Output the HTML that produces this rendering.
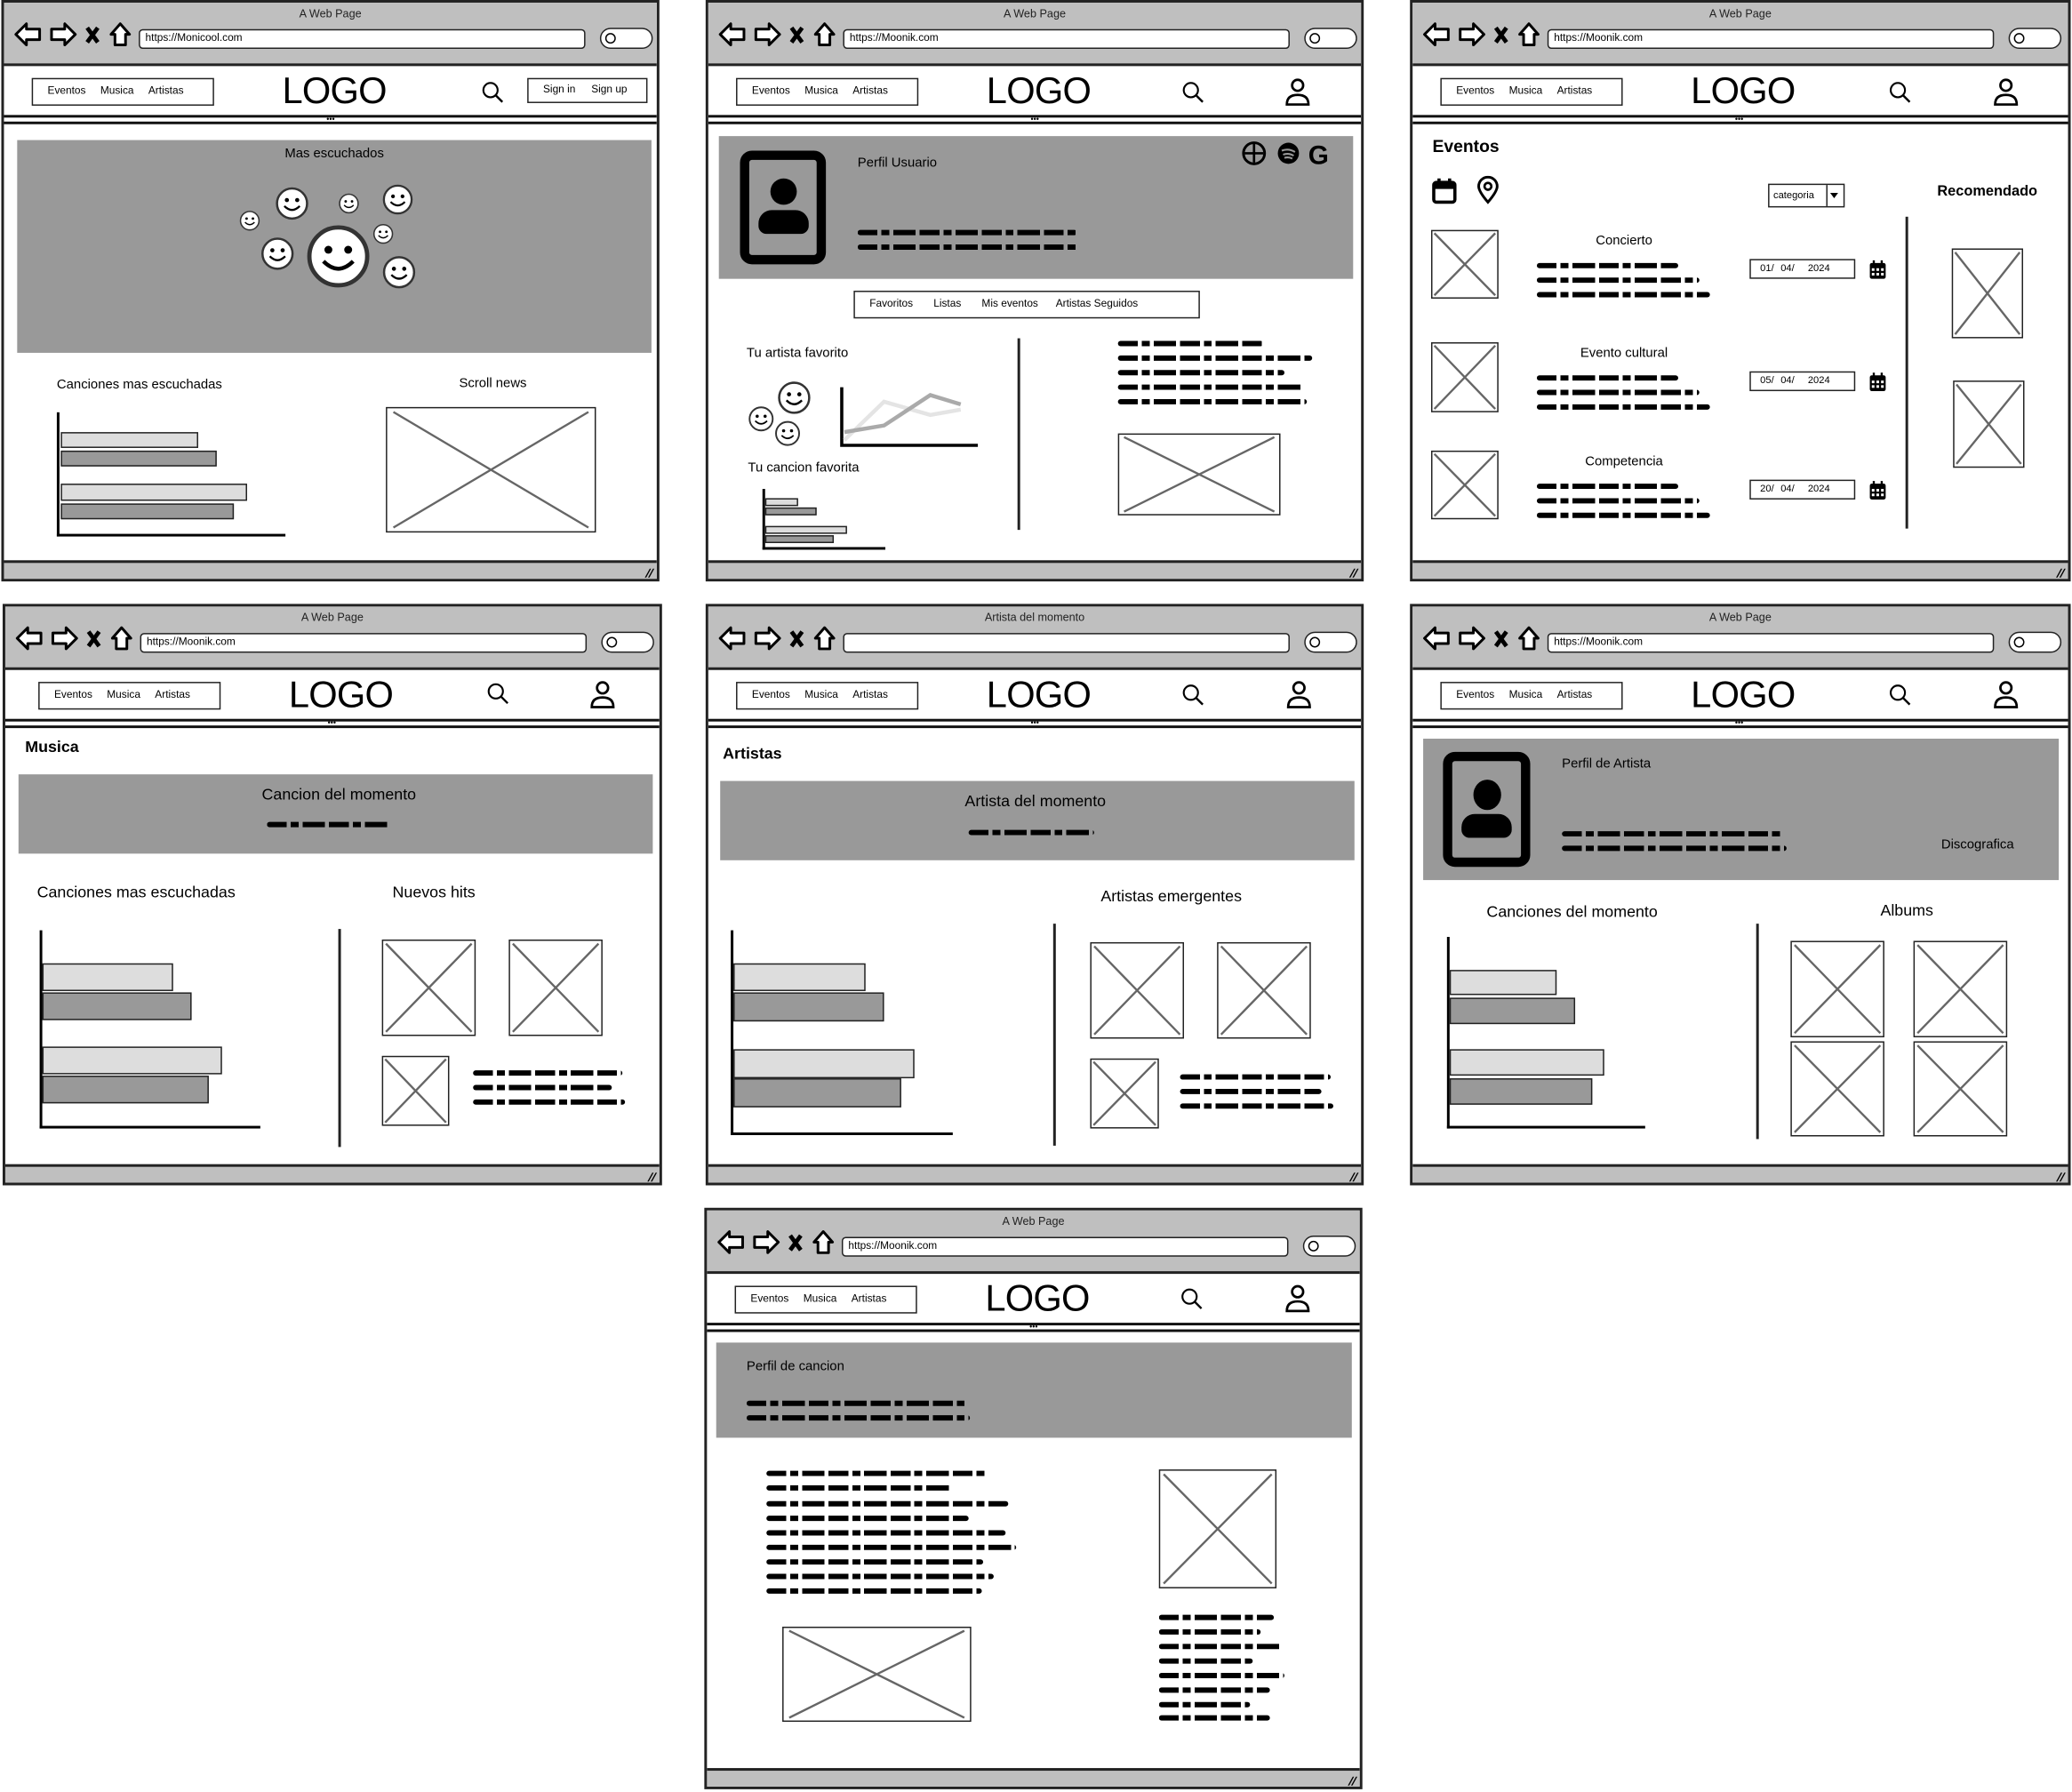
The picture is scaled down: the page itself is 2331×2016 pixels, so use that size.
<!DOCTYPE html>
<html><head><meta charset="utf-8">
<style>
*{box-sizing:border-box;margin:0;padding:0}
html,body{width:2331px;height:2015px;overflow:hidden;background:#fff}
#root{position:absolute;left:0;top:0;width:1568px;height:1356px;transform:scale(1.48661);transform-origin:0 0;font-family:"Liberation Sans",sans-serif;color:#000}
.w{position:absolute;width:498px;height:440px;border:2px solid #222;background:#fff;overflow:hidden}
.w>*{position:absolute}
.tb{left:0;top:0;width:100%;height:48px;background:#bfbfbf;border-bottom:2px solid #222}
.tt{left:0;top:3px;width:100%;text-align:center;font-size:8.5px;color:#222}
.url{left:102px;top:20px;width:338px;height:15px;background:#fff;border:1.8px solid #222;border-radius:3px;font-size:8px;padding-left:4px;line-height:12px}
.sp{left:451px;top:19px;width:40px;height:16px;background:#fff;border:1.8px solid #222;border-radius:9px}
.sp:before{content:"";position:absolute;left:3px;top:3px;width:6px;height:6px;border:1.6px solid #000;border-radius:50%}
.nav{left:21px;top:57px;width:138px;height:21px;border:1.6px solid #222;font-size:8px;line-height:18px;padding-left:11px;word-spacing:0;white-space:nowrap}
.nav span{margin-right:11px}
.logo{left:200px;top:51px;width:100px;text-align:center;font-size:28px;line-height:32px;letter-spacing:-0.5px}
.l1{left:0;top:85px;width:100%;height:2px;background:#111}
.l2{left:0;top:90px;width:100%;height:2px;background:#111}
.dots{left:244px;top:87px;font-size:6px;line-height:4px;letter-spacing:0}
.bb{left:0;top:422px;width:100%;height:18px;background:#bfbfbf;border-top:2px solid #222}
.rz{right:3px;top:427px;font-size:9px;font-weight:bold;transform:skewX(-20deg)}
.ico{overflow:visible}
.g{background:#999}
.t{font-size:10px;white-space:nowrap}
.b{font-weight:bold}
.s{height:3.5px;border-radius:2px;background:repeating-linear-gradient(90deg,#000 0 15px,transparent 15px 18px,#000 18px 24px,transparent 24px 27px,#000 27px 44px,transparent 44px 47px)}
.ph{border:1.6px solid #222;background:#fff}
.ph svg{position:absolute;left:0;top:0;width:100%;height:100%}
.ax{border-left:2px solid #000;border-bottom:2px solid #000}
.bl{background:#ddd;border:1.4px solid #222}
.bd{background:#999;border:1.4px solid #222}
.vd{width:2px;background:#222}
.av{border:7px solid #000;border-radius:9px;background:#999}
.av i{position:absolute;left:50%;border-radius:50%;background:#000}
.db{border:1.4px solid #222;font-size:7.5px;line-height:12px;padding-left:7px;word-spacing:3px;background:#fff;white-space:nowrap}
</style></head><body>
<svg width="0" height="0" style="position:absolute">
<defs>
<symbol id="chr" viewBox="0 0 100 48">
<polygon points="9,24 17,16 17,20 27,20 27,28 17,28 17,32" fill="#fff" stroke="#000" stroke-width="2" stroke-linejoin="round"/>
<polygon points="54,24 46,16 46,20 36,20 36,28 46,28 46,32" fill="#fff" stroke="#000" stroke-width="2" stroke-linejoin="round"/>
<path d="M63 19 L71 30 M71 19 L63 30" stroke="#000" stroke-width="3.2"/>
<polygon points="88,16 95,24 92,24 92,32 84,32 84,24 81,24" fill="#fff" stroke="#000" stroke-width="2" stroke-linejoin="round"/>
</symbol>
<symbol id="sr" viewBox="0 0 20 20"><circle cx="8" cy="8" r="6" fill="none" stroke="#000" stroke-width="1.6"/><path d="M12.5 12.5 L18 18" stroke="#000" stroke-width="1.8"/></symbol>
<symbol id="us" viewBox="0 0 22 24"><circle cx="11" cy="6" r="4.6" fill="none" stroke="#000" stroke-width="2"/><path d="M2 22 Q2 14 11 14 Q20 14 20 22 Z" fill="none" stroke="#000" stroke-width="2"/></symbol>
<symbol id="sm" viewBox="0 0 40 40"><circle cx="20" cy="20" r="17.5" fill="#fff" stroke="#333" stroke-width="2.6"/><circle cx="14" cy="16" r="2.4"/><circle cx="26" cy="16" r="2.4"/><path d="M11 23 Q20 32 29 23" fill="none" stroke="#000" stroke-width="2.4"/></symbol>
<symbol id="x" viewBox="0 0 100 100" preserveAspectRatio="none"><path d="M3 3 L97 97 M97 3 L3 97" stroke="#666" stroke-width="1.6" vector-effect="non-scaling-stroke"/></symbol>
<symbol id="cal" viewBox="0 0 14 16"><rect x="1" y="3" width="12" height="12" rx="1.5" fill="#000"/><path d="M4 1v3M10 1v3" stroke="#000" stroke-width="1.6"/><g fill="#fff"><rect x="2.5" y="7" width="2" height="2"/><rect x="6" y="7" width="2" height="2"/><rect x="9.5" y="7" width="2" height="2"/><rect x="2.5" y="10.5" width="2" height="2"/><rect x="6" y="10.5" width="2" height="2"/><rect x="9.5" y="10.5" width="2" height="2"/></g></symbol>
</defs></svg>
<div id="root">

<!-- W1 -->
<div class="w" style="left:1px;top:0">
<div class="tb"></div><div class="tt">A Web Page</div>
<svg class="ico" style="left:0;top:0" width="100" height="48"><use href="#chr"/></svg>
<div class="url">https://Monicool.com</div><div class="sp"></div>
<div class="nav"><span>Eventos</span><span>Musica</span><span>Artistas</span></div>
<div class="logo">LOGO</div>
<svg style="left:361px;top:59px" width="18" height="18"><use href="#sr"/></svg>
<div style="left:396px;top:57px;width:91px;height:19px;border:1.6px solid #222;font-size:8px;line-height:16px;padding-left:11px;white-space:nowrap"><span style="margin-right:12px">Sign in</span><span>Sign up</span></div>
<div class="l1"></div><div class="l2"></div><div class="dots">•••</div>
<div class="g" style="left:10px;top:104px;width:480px;height:161px"></div>
<div class="t" style="left:150px;top:109px;width:200px;text-align:center">Mas escuchados</div>
<svg style="left:228px;top:167px" width="50" height="50"><use href="#sm"/></svg>
<svg style="left:205px;top:139px" width="26" height="26"><use href="#sm"/></svg>
<svg style="left:253px;top:144px" width="16" height="16"><use href="#sm"/></svg>
<svg style="left:286px;top:137px" width="24" height="24"><use href="#sm"/></svg>
<svg style="left:178px;top:157px" width="16" height="16"><use href="#sm"/></svg>
<svg style="left:194px;top:177px" width="26" height="26"><use href="#sm"/></svg>
<svg style="left:279px;top:167px" width="16" height="16"><use href="#sm"/></svg>
<svg style="left:286px;top:191px" width="26" height="26"><use href="#sm"/></svg>
<div class="t" style="left:40px;top:284px">Canciones mas escuchadas</div>
<div class="t" style="left:320px;top:283px;width:100px;text-align:center">Scroll news</div>
<div class="ax" style="left:40px;top:310px;width:173px;height:94px"></div>
<div class="bl" style="left:43px;top:325px;width:104px;height:12px"></div>
<div class="bd" style="left:43px;top:339px;width:118px;height:12px"></div>
<div class="bl" style="left:43px;top:364px;width:141px;height:13px"></div>
<div class="bd" style="left:43px;top:379px;width:131px;height:12px"></div>
<div class="ph" style="left:289px;top:306px;width:159px;height:95px"><svg><use href="#x"/></svg></div>
<div class="bb"></div><div class="rz">//</div>
</div>

<!-- W2 -->
<div class="w" style="left:534px;top:0">
<div class="tb"></div><div class="tt">A Web Page</div>
<svg class="ico" style="left:0;top:0" width="100" height="48"><use href="#chr"/></svg>
<div class="url">https://Moonik.com</div><div class="sp"></div>
<div class="nav"><span>Eventos</span><span>Musica</span><span>Artistas</span></div>
<div class="logo">LOGO</div>
<svg style="left:358px;top:59px" width="18" height="18"><use href="#sr"/></svg>
<svg style="left:436px;top:57px" width="20" height="22"><use href="#us"/></svg>
<div class="l1"></div><div class="l2"></div><div class="dots">•••</div>
<div class="g" style="left:8px;top:101px;width:480px;height:108px"></div>
<div class="av" style="left:24px;top:112px;width:65px;height:86px"><i style="width:20px;height:20px;margin-left:-10px;top:14px"></i><i style="width:38px;height:18px;margin-left:-19px;top:38px;border-radius:10px 10px 6px 6px"></i></div>
<div class="t" style="left:113px;top:116px">Perfil Usuario</div>
<div class="s" style="left:113px;top:172px;width:166px"></div>
<div class="s" style="left:113px;top:183px;width:168px"></div>
<svg style="left:402px;top:104px" width="70" height="20"><circle cx="11" cy="10" r="8" fill="none" stroke="#000" stroke-width="2"/><path d="M11 3v14M4 10h14" stroke="#000" stroke-width="1.8"/><circle cx="37" cy="10" r="8"/><path d="M32 8q5-2 10 1M33 11q4-1.5 8 .8M34 13.5q3-1 6 .5" stroke="#999" stroke-width="1.4" fill="none"/><text x="52" y="18" font-size="20" font-weight="bold" font-family="Liberation Sans">G</text></svg>
<div style="left:110px;top:218px;width:262px;height:21px;border:1.6px solid #222;font-size:8px;line-height:18px;padding-left:11px;word-spacing:0;white-space:nowrap">Favoritos &nbsp; &nbsp; &nbsp; Listas &nbsp; &nbsp; &nbsp; Mis eventos &nbsp; &nbsp; &nbsp;Artistas Seguidos</div>
<div class="t" style="left:29px;top:260px">Tu artista favorito</div>
<svg style="left:52px;top:286px" width="26" height="26"><use href="#sm"/></svg>
<svg style="left:30px;top:305px" width="20" height="20"><use href="#sm"/></svg>
<svg style="left:50px;top:316px" width="20" height="20"><use href="#sm"/></svg>
<svg style="left:98px;top:288px" width="110" height="50"><path d="M3 3V47H106" stroke="#000" stroke-width="2.4" fill="none"/><path d="M5 43 L35 14 L70 24 L93 20" stroke="#e4e4e4" stroke-width="3" fill="none"/><path d="M5 37 L35 32 L70 9 L93 16" stroke="#aaa" stroke-width="3" fill="none"/></svg>
<div class="t" style="left:30px;top:347px">Tu cancion favorita</div>
<div class="ax" style="left:41px;top:368px;width:93px;height:46px"></div>
<div class="bl" style="left:43px;top:375px;width:25px;height:6px"></div>
<div class="bd" style="left:43px;top:382px;width:39px;height:6px"></div>
<div class="bl" style="left:43px;top:396px;width:62px;height:6px"></div>
<div class="bd" style="left:43px;top:403px;width:52px;height:6px"></div>
<div class="vd" style="left:234px;top:254px;height:145px"></div>
<div class="s" style="left:310px;top:256px;width:110px"></div>
<div class="s" style="left:310px;top:267px;width:147px"></div>
<div class="s" style="left:310px;top:278px;width:126px"></div>
<div class="s" style="left:310px;top:289px;width:141px"></div>
<div class="s" style="left:310px;top:300px;width:143px"></div>
<div class="ph" style="left:310px;top:326px;width:123px;height:62px"><svg><use href="#x"/></svg></div>
<div class="bb"></div><div class="rz">//</div>
</div>

<!-- W3 -->
<div class="w" style="left:1067px;top:0;width:500px">
<div class="tb"></div><div class="tt">A Web Page</div>
<svg class="ico" style="left:0;top:0" width="100" height="48"><use href="#chr"/></svg>
<div class="url">https://Moonik.com</div><div class="sp"></div>
<div class="nav"><span>Eventos</span><span>Musica</span><span>Artistas</span></div>
<div class="logo">LOGO</div>
<svg style="left:360px;top:59px" width="18" height="18"><use href="#sr"/></svg>
<svg style="left:439px;top:57px" width="20" height="22"><use href="#us"/></svg>
<div class="l1"></div><div class="l2"></div><div class="dots">•••</div>
<div class="t b" style="left:15px;top:101px;font-size:13px">Eventos</div>
<svg style="left:14px;top:131px" width="20" height="22" viewBox="0 0 20 22"><rect x="2" y="5" width="16" height="15" rx="2" fill="none" stroke="#000" stroke-width="2.4"/><rect x="2" y="5" width="16" height="5" fill="#000"/><path d="M6 2v5M14 2v5" stroke="#000" stroke-width="2.4"/></svg>
<svg style="left:48px;top:131px" width="18" height="22" viewBox="0 0 18 22"><path d="M9 20 C3 13 2 10 2 8 A7 7 0 0 1 16 8 C16 10 15 13 9 20 Z" fill="none" stroke="#000" stroke-width="2"/><circle cx="9" cy="8" r="2.6" fill="none" stroke="#000" stroke-width="1.8"/></svg>
<div style="left:269px;top:137px;width:58px;height:18px;border:1.4px solid #222;font-size:7.5px;line-height:15px;padding-left:3px">categoria</div>
<div style="left:313px;top:138px;width:1.4px;height:16px;background:#222"></div>
<div style="left:316px;top:144px;width:0;height:0;border-left:3px solid transparent;border-right:3px solid transparent;border-top:4px solid #000"></div>
<div class="t b" style="left:397px;top:137px;font-size:11px">Recomendado</div>
<div class="vd" style="left:373px;top:162px;height:236px"></div>
<div class="ph" style="left:14px;top:172px;width:51px;height:52px"><svg><use href="#x"/></svg></div>
<div class="ph" style="left:14px;top:257px;width:51px;height:53px"><svg><use href="#x"/></svg></div>
<div class="ph" style="left:14px;top:339px;width:51px;height:52px"><svg><use href="#x"/></svg></div>
<div class="t" style="left:110px;top:175px;width:100px;text-align:center">Concierto</div>
<div class="t" style="left:110px;top:260px;width:100px;text-align:center">Evento cultural</div>
<div class="t" style="left:110px;top:342px;width:100px;text-align:center">Competencia</div>
<div class="s" style="left:94px;top:197px;width:107px"></div><div class="s" style="left:94px;top:208px;width:123px"></div><div class="s" style="left:94px;top:219px;width:131px"></div>
<div class="s" style="left:94px;top:282px;width:107px"></div><div class="s" style="left:94px;top:293px;width:123px"></div><div class="s" style="left:94px;top:304px;width:131px"></div>
<div class="s" style="left:94px;top:364px;width:107px"></div><div class="s" style="left:94px;top:375px;width:123px"></div><div class="s" style="left:94px;top:386px;width:131px"></div>
<div class="db" style="left:255px;top:194px;width:80px;height:15px">01/ 04/ &nbsp;2024</div>
<div class="db" style="left:255px;top:279px;width:80px;height:15px">05/ 04/ &nbsp;2024</div>
<div class="db" style="left:255px;top:361px;width:80px;height:15px">20/ 04/ &nbsp;2024</div>
<svg style="left:345px;top:194px" width="14" height="16"><use href="#cal"/></svg>
<svg style="left:345px;top:279px" width="14" height="16"><use href="#cal"/></svg>
<svg style="left:345px;top:361px" width="14" height="16"><use href="#cal"/></svg>
<div class="ph" style="left:408px;top:186px;width:54px;height:68px"><svg><use href="#x"/></svg></div>
<div class="ph" style="left:409px;top:286px;width:54px;height:66px"><svg><use href="#x"/></svg></div>
<div class="bb"></div><div class="rz">//</div>
</div>

<!-- W4 -->
<div class="w" style="left:2px;top:457px;width:499px">
<div class="tb"></div><div class="tt">A Web Page</div>
<svg class="ico" style="left:0;top:0" width="100" height="48"><use href="#chr"/></svg>
<div class="url">https://Moonik.com</div><div class="sp"></div>
<div class="nav" style="left:25px"><span>Eventos</span><span>Musica</span><span>Artistas</span></div>
<div class="logo" style="left:204px">LOGO</div>
<svg style="left:364px;top:57px" width="18" height="18"><use href="#sr"/></svg>
<svg style="left:442px;top:56px" width="20" height="22"><use href="#us"/></svg>
<div class="l1"></div><div class="l2"></div><div class="dots">•••</div>
<div class="t b" style="left:15px;top:99px;font-size:12px">Musica</div>
<div class="g" style="left:10px;top:127px;width:480px;height:60px"></div>
<div class="t" style="left:150px;top:135px;width:205px;text-align:center;font-size:12px">Cancion del momento</div>
<div class="s" style="left:198px;top:163px;width:93px"></div>
<div class="t" style="left:24px;top:209px;font-size:12px">Canciones mas escuchadas</div>
<div class="t" style="left:293px;top:209px;font-size:12px">Nuevos hits</div>
<div class="ax" style="left:26px;top:245px;width:167px;height:150px"></div>
<div class="bl" style="left:28px;top:270px;width:99px;height:21px"></div>
<div class="bd" style="left:28px;top:292px;width:113px;height:21px"></div>
<div class="bl" style="left:28px;top:333px;width:136px;height:21px"></div>
<div class="bd" style="left:28px;top:355px;width:126px;height:21px"></div>
<div class="vd" style="left:252px;top:244px;height:165px"></div>
<div class="ph" style="left:285px;top:252px;width:71px;height:73px"><svg><use href="#x"/></svg></div>
<div class="ph" style="left:381px;top:252px;width:71px;height:73px"><svg><use href="#x"/></svg></div>
<div class="ph" style="left:285px;top:340px;width:51px;height:53px"><svg><use href="#x"/></svg></div>
<div class="s" style="left:354px;top:351px;width:113px"></div><div class="s" style="left:354px;top:362px;width:105px"></div><div class="s" style="left:354px;top:373px;width:115px"></div>
<div class="bb"></div><div class="rz">//</div>
</div>

<!-- W5 -->
<div class="w" style="left:534px;top:457px">
<div class="tb"></div><div class="tt">Artista del momento</div>
<svg class="ico" style="left:0;top:0" width="100" height="48"><use href="#chr"/></svg>
<div class="url"></div><div class="sp"></div>
<div class="nav"><span>Eventos</span><span>Musica</span><span>Artistas</span></div>
<div class="logo">LOGO</div>
<svg style="left:358px;top:58px" width="18" height="18"><use href="#sr"/></svg>
<svg style="left:437px;top:56px" width="20" height="22"><use href="#us"/></svg>
<div class="l1"></div><div class="l2"></div><div class="dots">•••</div>
<div class="t b" style="left:11px;top:104px;font-size:12px">Artistas</div>
<div class="g" style="left:9px;top:132px;width:480px;height:60px"></div>
<div class="t" style="left:145px;top:140px;width:205px;text-align:center;font-size:12px">Artista del momento</div>
<div class="s" style="left:197px;top:169px;width:95px"></div>
<div class="t" style="left:297px;top:212px;font-size:12px">Artistas emergentes</div>
<div class="ax" style="left:17px;top:245px;width:168px;height:155px"></div>
<div class="bl" style="left:19px;top:270px;width:100px;height:21px"></div>
<div class="bd" style="left:19px;top:292px;width:114px;height:22px"></div>
<div class="bl" style="left:19px;top:335px;width:137px;height:22px"></div>
<div class="bd" style="left:19px;top:357px;width:127px;height:22px"></div>
<div class="vd" style="left:261px;top:240px;height:168px"></div>
<div class="ph" style="left:289px;top:254px;width:71px;height:73px"><svg><use href="#x"/></svg></div>
<div class="ph" style="left:385px;top:254px;width:71px;height:73px"><svg><use href="#x"/></svg></div>
<div class="ph" style="left:289px;top:342px;width:52px;height:53px"><svg><use href="#x"/></svg></div>
<div class="s" style="left:357px;top:354px;width:114px"></div><div class="s" style="left:357px;top:365px;width:107px"></div><div class="s" style="left:357px;top:376px;width:116px"></div>
<div class="bb"></div><div class="rz">//</div>
</div>

<!-- W6 -->
<div class="w" style="left:1067px;top:457px;width:500px">
<div class="tb"></div><div class="tt">A Web Page</div>
<svg class="ico" style="left:0;top:0" width="100" height="48"><use href="#chr"/></svg>
<div class="url">https://Moonik.com</div><div class="sp"></div>
<div class="nav"><span>Eventos</span><span>Musica</span><span>Artistas</span></div>
<div class="logo">LOGO</div>
<svg style="left:360px;top:58px" width="18" height="18"><use href="#sr"/></svg>
<svg style="left:439px;top:56px" width="20" height="22"><use href="#us"/></svg>
<div class="l1"></div><div class="l2"></div><div class="dots">•••</div>
<div class="g" style="left:8px;top:100px;width:481px;height:107px"></div>
<div class="av" style="left:23px;top:110px;width:66px;height:87px"><i style="width:21px;height:23px;margin-left:-10.5px;top:14px"></i><i style="width:38px;height:18px;margin-left:-19px;top:40px;border-radius:10px 10px 6px 6px"></i></div>
<div class="t" style="left:113px;top:114px">Perfil de Artista</div>
<div class="s" style="left:113px;top:170px;width:168px"></div>
<div class="s" style="left:113px;top:181px;width:170px"></div>
<div class="t" style="left:400px;top:175px">Discografica</div>
<div class="t" style="left:56px;top:224px;font-size:12px">Canciones del momento</div>
<div class="t" style="left:354px;top:223px;font-size:12px">Albums</div>
<div class="ax" style="left:26px;top:250px;width:150px;height:145px"></div>
<div class="bl" style="left:28px;top:275px;width:81px;height:19px"></div>
<div class="bd" style="left:28px;top:296px;width:95px;height:20px"></div>
<div class="bl" style="left:28px;top:335px;width:117px;height:20px"></div>
<div class="bd" style="left:28px;top:357px;width:108px;height:20px"></div>
<div class="vd" style="left:260px;top:240px;height:163px"></div>
<div class="ph" style="left:286px;top:253px;width:71px;height:73px"><svg><use href="#x"/></svg></div>
<div class="ph" style="left:379px;top:253px;width:71px;height:73px"><svg><use href="#x"/></svg></div>
<div class="ph" style="left:286px;top:329px;width:71px;height:72px"><svg><use href="#x"/></svg></div>
<div class="ph" style="left:379px;top:329px;width:71px;height:72px"><svg><use href="#x"/></svg></div>
<div class="bb"></div><div class="rz">//</div>
</div>

<!-- W7 -->
<div class="w" style="left:533px;top:914px">
<div class="tb"></div><div class="tt">A Web Page</div>
<svg class="ico" style="left:0;top:0" width="100" height="48"><use href="#chr"/></svg>
<div class="url">https://Moonik.com</div><div class="sp"></div>
<div class="nav"><span>Eventos</span><span>Musica</span><span>Artistas</span></div>
<div class="logo">LOGO</div>
<svg style="left:358px;top:58px" width="18" height="18"><use href="#sr"/></svg>
<svg style="left:437px;top:56px" width="20" height="22"><use href="#us"/></svg>
<div class="l1"></div><div class="l2"></div><div class="dots">•••</div>
<div class="g" style="left:7px;top:100px;width:481px;height:72px"></div>
<div class="t" style="left:30px;top:113px">Perfil de cancion</div>
<div class="s" style="left:30px;top:144px;width:167px"></div>
<div class="s" style="left:30px;top:155px;width:169px"></div>
<div class="s" style="left:45px;top:197px;width:167px"></div>
<div class="s" style="left:45px;top:208px;width:141px"></div>
<div class="s" style="left:45px;top:220px;width:183px"></div>
<div class="s" style="left:45px;top:231px;width:153px"></div>
<div class="s" style="left:45px;top:242px;width:181px"></div>
<div class="s" style="left:45px;top:253px;width:189px"></div>
<div class="s" style="left:45px;top:264px;width:164px"></div>
<div class="s" style="left:45px;top:275px;width:172px"></div>
<div class="s" style="left:45px;top:286px;width:163px"></div>
<div class="ph" style="left:342px;top:196px;width:89px;height:90px"><svg><use href="#x"/></svg></div>
<div class="ph" style="left:57px;top:315px;width:143px;height:72px"><svg><use href="#x"/></svg></div>
<div class="s" style="left:342px;top:306px;width:87px"></div>
<div class="s" style="left:342px;top:317px;width:77px"></div>
<div class="s" style="left:342px;top:328px;width:94px"></div>
<div class="s" style="left:342px;top:339px;width:71px"></div>
<div class="s" style="left:342px;top:350px;width:95px"></div>
<div class="s" style="left:342px;top:361px;width:84px"></div>
<div class="s" style="left:342px;top:372px;width:69px"></div>
<div class="s" style="left:342px;top:382px;width:84px"></div>
<div class="bb"></div><div class="rz">//</div>
</div>

</div>
</body></html>
